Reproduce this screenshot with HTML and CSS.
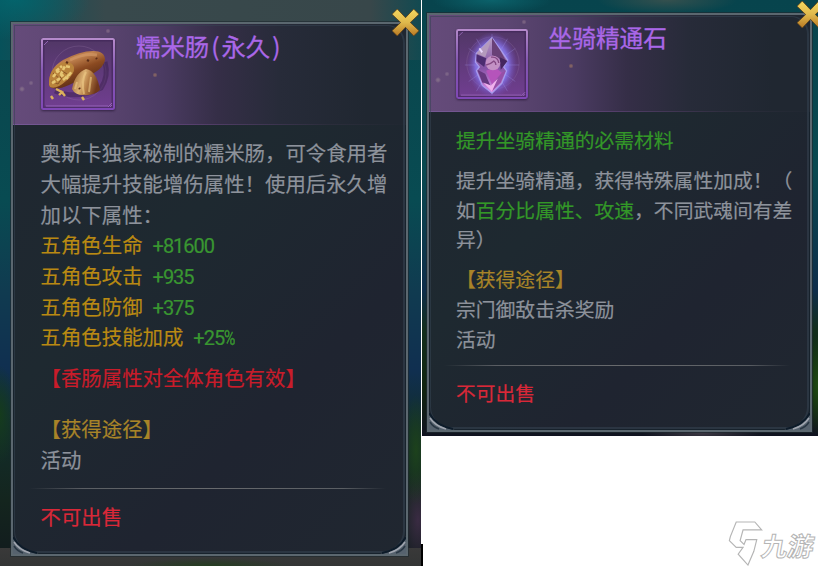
FILE: index.html
```html
<!DOCTYPE html>
<html lang="zh-CN">
<head>
<meta charset="utf-8">
<title>道具说明</title>
<link rel="stylesheet" href="styles.css">
</head>
<body>
<svg class="defs" width="0" height="0" aria-hidden="true">
  <defs>
    <linearGradient id="gold" x1="0" y1="0" x2="0" y2="1"><stop offset="0" stop-color="#f4d75f"/><stop offset=".5" stop-color="#dfb94c"/><stop offset="1" stop-color="#b97924"/></linearGradient>
    <linearGradient id="frame" x1="0" y1="0" x2="0" y2="1"><stop offset="0" stop-color="#b58acb"/><stop offset=".45" stop-color="#8659b4"/><stop offset="1" stop-color="#8048b6"/></linearGradient>
    <linearGradient id="tile" x1="0" y1="0" x2="0" y2="1"><stop offset="0" stop-color="#513766"/><stop offset="1" stop-color="#713e91"/></linearGradient>
    <linearGradient id="sausage" x1="0" y1="0" x2=".55" y2="1"><stop offset="0" stop-color="#8d4a25"/><stop offset=".35" stop-color="#c18350"/><stop offset=".6" stop-color="#8b4a21"/><stop offset="1" stop-color="#4e240f"/></linearGradient>
    <linearGradient id="slice" x1="0" y1="0" x2="1" y2=".3"><stop offset="0" stop-color="#8f5625"/><stop offset=".45" stop-color="#dcb173"/><stop offset=".65" stop-color="#b88148"/><stop offset="1" stop-color="#70381b"/></linearGradient>
    <radialGradient id="glow"><stop offset=".3" stop-color="#aaa6ff"/><stop offset=".65" stop-color="#8676ee" stop-opacity=".85"/><stop offset="1" stop-color="#6e48b0" stop-opacity="0"/></radialGradient>
    <linearGradient id="gem" x1="0" y1="0" x2="0" y2="1"><stop offset="0" stop-color="#b69ac5"/><stop offset=".55" stop-color="#8452a5"/><stop offset="1" stop-color="#e291ed"/></linearGradient>
    <symbol id="close" viewBox="0 0 28 28">
      <path d="M5.5 0 14 9 22.5 0 28 5.5 19 14 28 22.5 22.5 28 14 19 5.5 28 0 22.5 9 14 0 5.5Z" fill="url(#gold)" stroke="#5b421d" stroke-width=".9"/>
    </symbol>
    <symbol id="corner" viewBox="0 0 26 18">
      <path d="M0 0Q6 15 26 18H0Z" fill="#56626e"/>
      <path d="M0 1Q7 14 24 17" fill="none" stroke="#0d1b29" stroke-width="2"/>
      <path d="M1 6Q6 14 17 17" fill="none" stroke="#a0a5af" stroke-width="1.5"/>
      <path d="M1 10Q4 15 10 17" fill="none" stroke="#293744" stroke-width="1.5"/>
    </symbol>
    <symbol id="tileframe" viewBox="0 0 74 72">
      <rect x="1" y="1" width="72" height="70" rx="1.5" fill="url(#tile)" stroke="url(#frame)" stroke-width="2"/>
      <rect x="2.8" y="2.8" width="68.4" height="66.4" fill="none" stroke="#402558" stroke-opacity=".7" stroke-width="1.4"/>
      <circle cx="38" cy="35" r="27" fill="none" stroke="#9775a7" stroke-opacity=".28"/>
      <path d="M3 7 7 3M67 69 71 65M69 69 71 67M5 68H67" stroke="#a06fc4" stroke-opacity=".8" fill="none"/>
    </symbol>
  </defs>
</svg>
<main class="board">
  <section class="scene scene-left">
    <article class="panel panel-left">
      <header class="head">
        <svg class="item" viewBox="0 0 74 72">
          <use href="#tileframe"/>
          <path d="M14 53Q36 62 60 50Q68 38 64 24" fill="none" stroke="#351c46" stroke-opacity=".45" stroke-width="5"/>
          <path d="M8 47Q7 31 22 22Q39 13 52 13Q64 13 64 22Q63 29 53 35L28 47Q15 53 9 49Z" fill="url(#sausage)"/>
          <path d="M29 22Q43 15 56 17" fill="none" stroke="#d49a67" stroke-opacity=".65" stroke-width="3"/>
          <path d="M8 47Q7 32 20 25Q30 22 33 29Q34 36 25 43Q15 52 9 49Z" fill="#b9833b"/>
          <path d="M12 35l7 6 2-8 5 3M10 43l7 3 4-6" fill="none" stroke="#8a5526" stroke-width="1"/>
          <path d="M12 39l5-6 3 3 4-8 5 1M11 45l7-4 3-4 5 3 5-7M15 33l6-5M22 42l8-7" fill="none" stroke="#e6c673" stroke-width="2.6" stroke-dasharray="4 1.5"/>
          <path d="M31 51Q34 35 45 31Q56 33 59 52Q53 58 42 57Q34 57 31 51Z" fill="url(#slice)"/>
          <path d="M45 34Q40 43 43 56M50 39l-2 15M36 44l-2 7" fill="none" stroke="#efcb87" stroke-opacity=".6" stroke-width="2"/>
          <path d="M46 22l2 1M55 20l1 1M25 24l2 1M38 50l1 1" stroke="#5a2c17" stroke-width="2.4"/>
          <path d="M15 51l6 3-3 3M20 53l4 5M10 58l2 3M41 59l2 3" fill="none" stroke="#dcb15c" stroke-width="2.4"/>
        </svg>
        <h1 class="title">糯米肠<span class="half">(</span>永久<span class="half">)</span></h1>
      </header>
      <div class="body">
        <p>奥斯卡独家秘制的糯米肠，可令食用者</p>
        <p>大幅提升技能增伤属性！使用后永久增</p>
        <p>加以下属性：</p>
        <p class="gold">五角色生命<span class="num">+81600</span></p>
        <p class="gold">五角色攻击<span class="num">+935</span></p>
        <p class="gold">五角色防御<span class="num">+375</span></p>
        <p class="gold">五角色技能加成<span class="num">+25<span class="pct">%</span></span></p>
        <p class="notice">【香肠属性对全体角色有效】</p>
        <p class="source">【获得途径】</p>
        <p>活动</p>
        <hr class="rule">
        <p class="locked">不可出售</p>
      </div>
      <svg class="corner bl"><use href="#corner"/></svg>
      <svg class="corner br"><use href="#corner"/></svg>
      <svg class="close" viewBox="0 0 28 28"><use href="#close"/></svg>
    </article>
    <div class="ground"></div>
  </section>
  <div class="side">
    <section class="scene scene-right">
      <article class="panel panel-right">
        <header class="head">
          <svg class="item" viewBox="0 0 74 72">
            <use href="#tileframe"/>
            <ellipse cx="37" cy="37" rx="26" ry="34" fill="url(#glow)"/>
            <path d="M37 5V68M13 20l48 34M61 20 13 54M9 37H65M21 10l32 54M53 10 21 64" stroke="#a295ef" stroke-opacity=".3" stroke-width="1"/>
            <path d="M37 9 21 25 20 34 24 39 21 43 27 58 37 66 47 56 52 43 49 39 53 32 47 23Z" fill="url(#gem)" stroke="#a79ced" stroke-width="1.3"/>
            <path d="M37 9 21 25 30 29Z" fill="#b49abd"/>
            <path d="M37 9V27L52 34 46 23Z" fill="#694177"/>
            <path d="M21 26 31 30 29 39 21 33Z" fill="#4b2c70"/>
            <path d="M45 29 53 33 46 42Z" fill="#44265f"/>
            <path d="M22 42 30 46 36 60 27 55Z" fill="#65387f"/>
            <path d="M51 43 42 47 37 64 46 55Z" fill="#9650a7"/>
            <path d="M31 43 40 39 47 45 37 57Z" fill="#b554bb"/>
            <path d="M28 55 36 58 43 51 37 64Z" fill="#f0b1ed"/>
            <circle cx="38" cy="35" r="7.5" fill="#c391c5"/>
            <path d="M31 37q5-1 8-4 2 1 2 4M36 29q7-1 8 6" fill="none" stroke="#844984" stroke-width="1.4"/>
            <path d="M24 20l3 4" stroke="#e6d4fa" stroke-width="2"/>
          </svg>
          <h1 class="title">坐骑精通石</h1>
        </header>
        <div class="body">
          <p class="lead">提升坐骑精通的必需材料</p>
          <p>提升坐骑精通，获得特殊属性加成！（</p>
          <p>如<span class="green">百分比属性、攻速</span>，不同武魂间有差</p>
          <p>异）</p>
          <p class="source">【获得途径】</p>
          <p>宗门御敌击杀奖励</p>
          <p>活动</p>
          <hr class="rule">
          <p class="locked">不可出售</p>
        </div>
        <svg class="corner bl"><use href="#corner"/></svg>
        <svg class="corner br"><use href="#corner"/></svg>
        <svg class="close" viewBox="0 0 28 28"><use href="#close"/></svg>
      </article>
    </section>
    <footer class="brand">
      <svg class="logo" viewBox="0 0 36 46"><path d="M8 1H27L34 9H15L12 20 16 24 18 19H29L26 31 20 45 10 34 15 27H8L1 20 2 16Z" fill="#fff" stroke="#b5b5b5" stroke-width="1.2"/></svg>
      <span class="brand-name">九游</span>
    </footer>
    <i class="stub"></i>
  </div>
</main>
</body>
</html>
```
FILE: styles.css
```css
* { box-sizing: border-box; }
body { margin: 0; background: #fff; overflow: hidden; font-family: "Noto Sans CJK SC", sans-serif; }
.defs { position: absolute; }
.board { display: flex; gap: 1px; width: 818px; height: 566px; }
.scene { position: relative; overflow: hidden; }
.scene-left {
  width: 421px; height: 566px; flex: none; padding: 22px 0 0 11px;
  background:
    radial-gradient(ellipse 16px 50px at 0 415px, #153b1c, transparent),
    radial-gradient(ellipse 14px 55px at 416px 450px, #1d421c, transparent),
    radial-gradient(ellipse 18px 50px at 418px 520px, #3a2b43, transparent),
    radial-gradient(ellipse 75px 40px at 15px 0, #04636b, transparent),
    linear-gradient(90deg, #07515a, #38494c 25%, #38474a 88%, #124a51) 0 0 / 100% 60px no-repeat,
    linear-gradient(#0a464d 0, #084b52 200px, #103b50 290px, #102f50 370px, #122d2b 430px, #14251e 500px, #111a1e 566px);
}
.scene-right {
  width: 396px; height: 436px; padding: 13px 0 0 5px;
  background:
    radial-gradient(ellipse 14px 50px at 396px 385px, #1f4b12, transparent),
    radial-gradient(ellipse 60px 12px at 280px 433px, #3b3742, transparent),
    radial-gradient(ellipse 60px 14px at 70px 0, #0b626b, transparent),
    radial-gradient(ellipse 70px 14px at 245px 0, #35504e, transparent),
    linear-gradient(#07444d 0, #094950 170px, #0c394c 240px, #0e2d4a 290px, #122e1c 330px, #10240f 390px, #101320 436px);
}
.panel {
  position: relative; z-index: 1; border: 2px solid #5b676f;
  background: linear-gradient(135deg, #202630, #1e2930 40%, #1f2430 70%, #202730);
  box-shadow: 0 0 0 1px rgba(30,42,48,.65), inset 0 0 0 1px #17222c;
}
.panel::after {
  content: ""; position: absolute; inset: 1px; border: 2px solid rgba(52,68,82,.55);
  border-top-width: 1px; border-left-width: 1px; border-radius: 0 18px 22px 22px; pointer-events: none;
}
.panel-left { width: 397px; height: 534px; --pitch: 20.42px; --line: 30.7px; }
.panel-right { width: 385px; height: 419px; --pitch: 19.8px; --line: 29.8px; }
.head {
  display: flex; align-items: flex-start; border-bottom: 1px solid; border-image: linear-gradient(90deg, #775996, #58406f 45%, #2b2d3b 80%, transparent) 1;
  background:
    radial-gradient(circle at 9px 65px, #806a87 0 1px, transparent 3px),
    radial-gradient(circle at 18px 59px, #7b6386 0 1px, transparent 2.5px),
    radial-gradient(circle at 142px 51px, #806163 0 1px, transparent 2.5px),
    radial-gradient(circle at 95px 7px, #786080 0 1px, transparent 2.5px),
    linear-gradient(90deg, #654b7a 0, #5d4672 20%, #4b3b62 38%, #352e47 52%, #272b39 68%, #202731 90%);
}
.panel-left .head { height: 101px; padding: 14px 0 0 28px; }
.panel-right .head { height: 97px; padding: 14px 0 0 27px; }
.item { flex: none; width: 74px; height: 72px; filter: drop-shadow(0 1px 1px rgba(24,12,36,.6)); }
.panel-right .item { width: 72px; height: 70px; }
.title { color: #aa67e8; font-weight: 400; white-space: nowrap; line-height: 34px; -webkit-text-stroke: .3px; }
.panel-left .title { margin: -9px 0 0 21px; font-size: 24.4px; }
.panel-right .title { margin: -9px 0 0 20.5px; font-size: 23.7px; }
.half { display: inline-block; width: 12.2px; text-align: center; }
.body { padding: 13px 0 0 27px; color: #8d929b; font-size: var(--pitch); line-height: var(--line); -webkit-text-stroke: .2px; }
.panel-left .body { padding: 12.3px 0 0 27.5px; }
.body p { margin: 0; height: var(--line); white-space: nowrap; }
.body .gold { color: #b98a12; }
.num { margin-left: 10px; color: #399630; font-family: Roboto, sans-serif; font-size: 20px; letter-spacing: -1px; }
.pct { display: inline-block; transform: scaleX(.78); transform-origin: left; -webkit-text-stroke: .4px; }
.green, .body .lead { color: #339728; }
.body .lead { margin-bottom: 10px; }
.body .notice { color: #c91c2a; margin: 10px 0 20.5px; }
.body .source { color: #a88428; }
.panel-right .source { margin-top: 10px; }
.body .locked { color: #d92838; }
.rule { height: 1px; border: 0; margin: 11.5px 20px 12px -12px; background: linear-gradient(90deg, transparent, #5a5e63 15%, #686a6d 50%, #5a5e63 88%, transparent); }
.panel-left .rule { margin: 13px 20px 12.5px -12px; }
.corner { position: absolute; z-index: 1; bottom: 0; width: 26px; height: 18px; }
.bl { left: 0; }
.br { right: 0; transform: scaleX(-1); }
.close { position: absolute; z-index: 2; width: 27px; height: 27px; top: -15px; right: -13px; overflow: visible; }
.panel-right .close { top: -14px; right: -14px; }
.ground { position: absolute; left: 0; right: 0; bottom: 0; height: 18px; background: radial-gradient(ellipse 80px 8px at 210px 100%, #253d20, transparent), linear-gradient(#393939, #333535); }
.side { position: relative; flex: none; width: 396px; }
.brand { display: flex; height: 130px; padding: 85px 0 0 306px; }
.logo { flex: none; width: 36px; height: 45px; }
.brand-name {
  margin: 4px 0 0 -2px; color: #fff; font-size: 26px; font-weight: 700; line-height: 40px; white-space: nowrap;
  -webkit-text-stroke: 1px #b5b5b5; transform: skewX(-10deg);
}
.stub { position: absolute; left: -1px; bottom: 0; width: 2px; height: 22px; background: #000; }
```
